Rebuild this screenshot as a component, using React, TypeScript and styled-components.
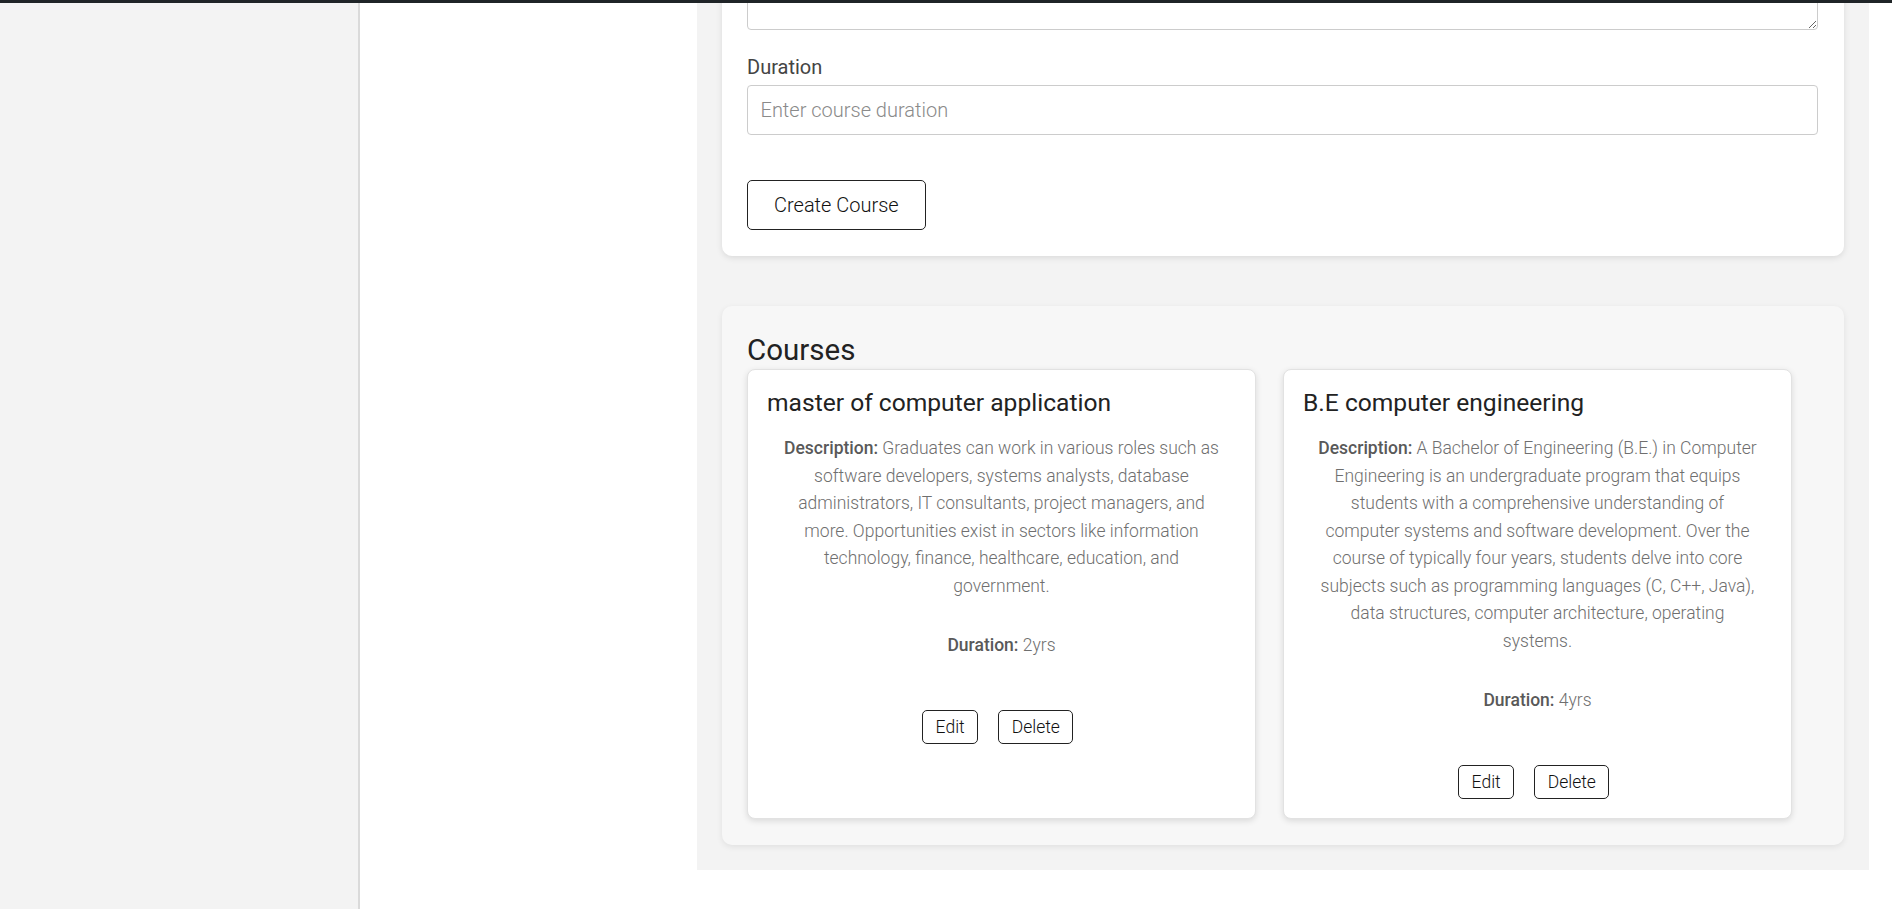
import React from "react";
import styled, { createGlobalStyle } from "styled-components";

const GlobalStyle = createGlobalStyle`
  * { box-sizing: border-box; }
  html, body { margin: 0; padding: 0; background: #ffffff; }
  body { font-family: Roboto, "Liberation Sans", Arial, sans-serif; color: #222; overflow: hidden; }
`;

const TopBar = styled.div`
  position: relative;
  z-index: 2;
  height: 3px;
  background: #1f2427;
`;

const Layout = styled.div`
  display: flex;
  align-items: flex-start;
  min-height: calc(100vh - 3px);
`;

const Sidebar = styled.aside`
  flex: 0 0 360px;
  align-self: stretch;
  background: #f3f3f3;
  border-right: 2px solid #dadada;
`;

const Content = styled.div`
  flex: 1;
  padding-left: 337px;
`;

const Main = styled.main`
  width: 1172px;
  margin-top: -123px;
  padding: 25px 25px 25px;
  background: #f3f3f3;
`;

const FormCard = styled.form`
  background: #ffffff;
  border-radius: 10px;
  box-shadow: 0 2px 6px rgba(0, 0, 0, 0.1);
  padding: 25px 26px 26px 25px;
`;

const Field = styled.div`
  & + & { margin-top: 26px; }
`;

const Label = styled.label`
  display: block;
  font-size: 20px;
  font-weight: 400;
  color: #444;
  line-height: 22.5px;
  margin-bottom: 6.5px;
`;

const inputBase = `
  display: block;
  width: 100%;
  border: 1px solid #cccccc;
  border-radius: 4px;
  font-family: Roboto, "Liberation Sans", Arial, sans-serif;
  font-size: 20px;
  font-weight: 300;
  color: #222;
  background: #fff;
  outline: none;
  &::placeholder { color: #8a8a8a; }
`;

const Input = styled.input`
  ${inputBase}
  height: 50px;
  padding: 0 12.5px;
`;

const TextArea = styled.textarea`
  ${inputBase}
  height: 100px;
  padding: 10px 12.5px;
  resize: vertical;
  margin: 0;
`;

const PrimaryButton = styled.button`
  display: block;
  margin-top: 45px;
  height: 50px;
  padding: 0 26px;
  background: #fff;
  border: 1px solid #222;
  border-radius: 5px;
  font-family: Roboto, "Liberation Sans", Arial, sans-serif;
  font-size: 20px;
  font-weight: 300;
  color: #111;
  cursor: pointer;
`;

const Panel = styled.section`
  margin-top: 50px;
  background: #f7f7f7;
  border-radius: 10px;
  box-shadow: 0 2px 6px rgba(0, 0, 0, 0.08);
  padding: 25px 25px 26px;
`;

const PanelTitle = styled.h2`
  margin: 2px 0 2px;
  font-size: 29.5px;
  font-weight: 400;
  line-height: 34px;
  color: #222;
`;

const CardRow = styled.div`
  display: flex;
  gap: 27px;
`;

const Card = styled.article`
  flex: 0 0 509px;
  display: flex;
  flex-direction: column;
  background: #fff;
  border: 1px solid #e2e2e2;
  border-radius: 8px;
  box-shadow: 0 2px 6px rgba(0, 0, 0, 0.12);
  padding: 19px;
`;

const CardTitle = styled.h3`
  margin: 0;
  font-size: 24.6px;
  font-weight: 400;
  line-height: 28.8px;
  color: #222;
`;

const Text = styled.p<{ $gap: number }>`
  margin: ${(p) => p.$gap}px 0 0;
  padding: 0 14.5px;
  text-align: center;
  font-size: 17.5px;
  font-weight: 300;
  line-height: 27.5px;
  color: #6f6f6f;
`;

const Strong = styled.strong`
  font-weight: 500;
  color: #595959;
`;

const Actions = styled.div`
  display: flex;
  justify-content: center;
  gap: 12.5px;
  margin-top: 51px;
`;

const SmallButton = styled.button`
  height: 34px;
  margin-right: 7.5px;
  padding: 0 12.5px;
  background: #fff;
  border: 1px solid #222;
  border-radius: 5px;
  font-family: Roboto, "Liberation Sans", Arial, sans-serif;
  font-size: 17.5px;
  font-weight: 300;
  color: #111;
  cursor: pointer;
`;

type Course = { title: string; description: string; duration: string };

const courses: Course[] = [
  {
    title: "master of computer application",
    description:
      "Graduates can work in various roles such as software developers, systems analysts, database administrators, IT consultants, project managers, and more. Opportunities exist in sectors like information technology, finance, healthcare, education, and government.",
    duration: "2yrs",
  },
  {
    title: "B.E computer engineering",
    description:
      "A Bachelor of Engineering (B.E.) in Computer Engineering is an undergraduate program that equips students with a comprehensive understanding of computer systems and software development. Over the course of typically four years, students delve into core subjects such as programming languages (C, C++, Java), data structures, computer architecture, operating systems.",
    duration: "4yrs",
  },
];

export default function App() {
  return (
    <>
      <GlobalStyle />
      <TopBar />
      <Layout>
        <Sidebar />
        <Content>
          <Main>
            <FormCard onSubmit={(e) => e.preventDefault()}>
              <Field>
                <TextArea aria-label="Description" />
              </Field>
              <Field>
                <Label>Duration</Label>
                <Input placeholder="Enter course duration" />
              </Field>
              <PrimaryButton type="submit">Create Course</PrimaryButton>
            </FormCard>
            <Panel>
              <PanelTitle>Courses</PanelTitle>
              <CardRow>
                {courses.map((c) => (
                  <Card key={c.title}>
                    <CardTitle>{c.title}</CardTitle>
                    <Text $gap={17.6}>
                      <Strong>Description:</Strong> {c.description}
                    </Text>
                    <Text $gap={31.6}>
                      <Strong>Duration:</Strong> {c.duration}
                    </Text>
                    <Actions>
                      <SmallButton>Edit</SmallButton>
                      <SmallButton>Delete</SmallButton>
                    </Actions>
                  </Card>
                ))}
              </CardRow>
            </Panel>
          </Main>
        </Content>
      </Layout>
    </>
  );
}
